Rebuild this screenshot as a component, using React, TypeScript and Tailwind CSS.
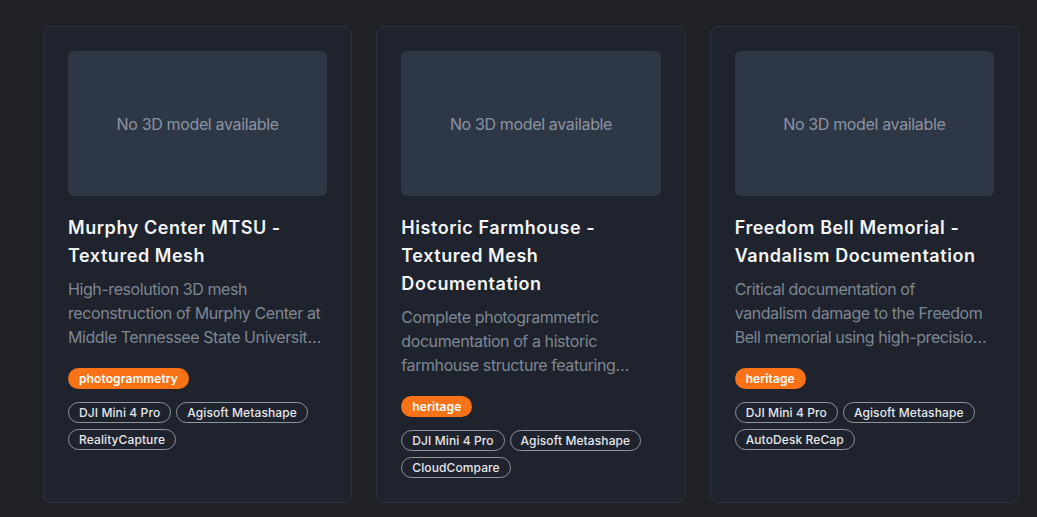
import React from "react";

type Project = {
  title: string;
  desc: string[];
  tag: string;
  tools: string[];
};

const projects: Project[] = [
  {
    title: "Murphy Center MTSU - Textured Mesh",
    desc: ["High-resolution 3D mesh reconstruction of Murphy Center at Middle Tennessee State University showcasing detailed architecture."],
    tag: "photogrammetry",
    tools: ["DJI Mini 4 Pro", "Agisoft Metashape", "RealityCapture"],
  },
  {
    title: "Historic Farmhouse - Textured Mesh Documentation",
    desc: ["Complete photogrammetric documentation of a historic farmhouse structure featuring detailed textures and geometry."],
    tag: "heritage",
    tools: ["DJI Mini 4 Pro", "Agisoft Metashape", "CloudCompare"],
  },
  {
    title: "Freedom Bell Memorial - Vandalism Documentation",
    desc: ["Critical documentation of", "vandalism damage to the Freedom Bell memorial using high-precision photogrammetry."],
    tag: "heritage",
    tools: ["DJI Mini 4 Pro", "Agisoft Metashape", "AutoDesk ReCap"],
  },
];

function Card({ p }: { p: Project }) {
  return (
    <div className="flex flex-col rounded-lg border border-[#2c3340] bg-[#1e232d] px-6 pt-6 pb-6">
      <div className="flex h-[145px] items-center justify-center rounded-md bg-[#2e3746]">
        <span className="text-base tracking-[-0.35px] text-[#8b93a1]">No 3D model available</span>
      </div>
      <h3 className="mt-[18px] text-lg leading-7 font-semibold tracking-[0.55px] text-[#f3f4f6]">{p.title}</h3>
      <p className="mt-[7px] line-clamp-3 text-base leading-6 tracking-[-0.42px] text-[#7f8794]">
        {p.desc.map((d, i) => (
          <React.Fragment key={i}>
            {i > 0 && <br />}
            {d}
          </React.Fragment>
        ))}
      </p>
      <div className="mt-[19px] flex">
        <span className="rounded-full bg-[#f97316] px-[11px] text-xs leading-[21px] font-semibold tracking-[0.1px] text-white">
          {p.tag}
        </span>
      </div>
      <div className="mt-[13px] flex flex-wrap gap-x-[5px] gap-y-[6px]">
        {p.tools.map((t) => (
          <span
            key={t}
            className="rounded-full border border-[#8f959e] px-[10px] text-xs leading-[19px] font-medium tracking-[0.1px] text-[#e5e7eb]"
          >
            {t}
          </span>
        ))}
      </div>
    </div>
  );
}

export default function App() {
  return (
    <div
      className="min-h-[517px] bg-[#202125] pt-[26px] pr-[18px] pl-[43px]"
      style={{ fontFamily: "Inter, 'Noto Sans', sans-serif" }}
    >
      <div className="grid grid-cols-3 items-stretch gap-6">
        {projects.map((p) => (
          <Card key={p.title} p={p} />
        ))}
      </div>
    </div>
  );
}
